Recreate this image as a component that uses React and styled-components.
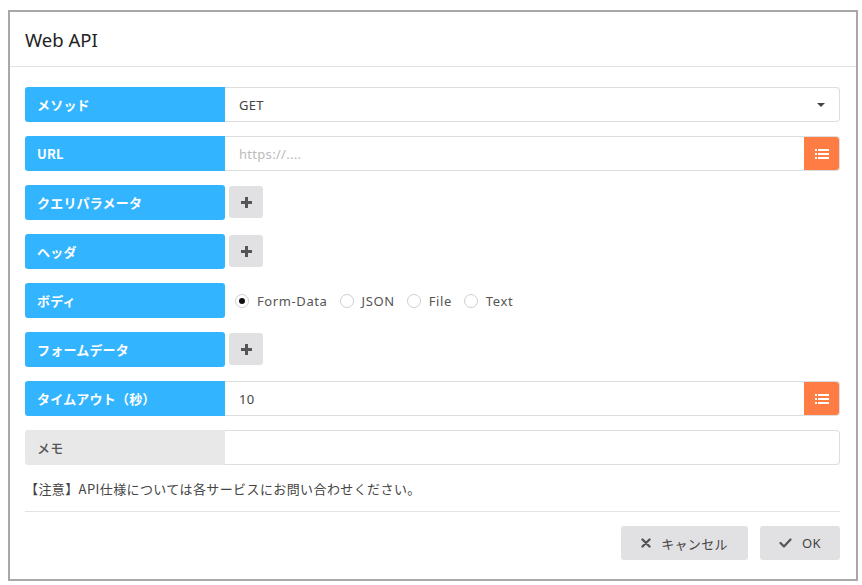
import React from "react";
import styled, { createGlobalStyle } from "styled-components";

const Global = createGlobalStyle`
  html, body { margin: 0; padding: 0; background: #fff; }
  body { font-family: "Open Sans", "Noto Sans CJK JP", sans-serif; }
  * { box-sizing: border-box; }
`;

const Page = styled.div`
  padding: 10px 4px 0 8px;
`;

const Dialog = styled.div`
  width: 850px;
  height: 571px;
  border: 2px solid #a8a8a8;
  background: #fff;
  display: flex;
  flex-direction: column;
`;

const Header = styled.div`
  height: 55px;
  border-bottom: 1px solid #e2e2e2;
  display: flex;
  align-items: center;
  padding: 0 15px;
  font-family: "Noto Sans", "Noto Sans CJK JP", sans-serif;
  font-size: 18.5px;
  color: #222;
`;

const Body = styled.div`
  padding: 20px 16px 0 15px;
  display: flex;
  flex-direction: column;
`;

const Row = styled.div`
  display: flex;
  height: 35px;
  margin-bottom: 14px;
  align-items: stretch;
`;

const Label = styled.div`
  width: 200px;
  flex: none;
  display: flex;
  align-items: center;
  padding-left: 12px;
  border-radius: ${(p) => (p.$solo ? "3px" : "3px 0 0 3px")};
  background: ${(p) => (p.$muted ? "#e8e8e8" : "#33b4ff")};
  color: ${(p) => (p.$muted ? "#555" : "#fff")};
  font-family: "Noto Sans CJK JP", sans-serif;
  font-weight: ${(p) => (p.$muted ? 500 : 700)};
  font-size: 13px;
  letter-spacing: 0.2px;
`;

const Field = styled.div`
  flex: 1;
  display: flex;
  align-items: center;
  border: 1px solid #dedede;
  border-left: none;
  border-radius: 0 4px 4px 0;
  padding-left: 14px;
  font-family: "Noto Sans", "Noto Sans CJK JP", sans-serif;
  font-size: 13px;
  letter-spacing: 0.3px;
  color: ${(p) => (p.$placeholder ? "#bbb" : "#444")};
  overflow: hidden;
`;

const FieldText = styled.span`
  flex: 1;
`;

const Caret = styled.span`
  width: 0;
  height: 0;
  border-left: 4px solid transparent;
  border-right: 4px solid transparent;
  border-top: 4px solid #444;
  margin-right: 14px;
`;

const OrangeBtn = styled.div`
  width: 36px;
  align-self: stretch;
  margin: -1px -1px -1px 0;
  background: #ff7d45;
  border-radius: 0 4px 4px 0;
  display: flex;
  align-items: center;
  justify-content: center;
`;

const PlusBtn = styled.div`
  width: 34px;
  height: 32px;
  margin: 1px 0 0 4px;
  align-self: flex-start;
  background: #e1e1e3;
  border-radius: 3px;
  display: flex;
  align-items: center;
  justify-content: center;
`;

const Radios = styled.div`
  display: flex;
  align-items: center;
  padding-left: 10px;
  gap: 12px;
  font-family: "Noto Sans", sans-serif;
  font-size: 13px;
  letter-spacing: 0.6px;
  color: #555;
`;

const RadioItem = styled.label`
  display: flex;
  align-items: center;
  gap: 8px;
`;

const RadioCircle = styled.span`
  width: 14px;
  height: 14px;
  border-radius: 50%;
  border: 1px solid #cfcfcf;
  display: flex;
  align-items: center;
  justify-content: center;
  &::after {
    content: "";
    width: 6px;
    height: 6px;
    border-radius: 50%;
    background: ${(p) => (p.$on ? "#111" : "transparent")};
  }
`;

const Note = styled.div`
  font-family: "Noto Sans CJK JP", sans-serif;
  font-size: 13px;
  letter-spacing: 0.4px;
  color: #444;
  height: 32px;
  line-height: 20px;
`;

const Divider = styled.div`
  height: 1px;
  background: #e3e3e3;
`;

const Footer = styled.div`
  display: flex;
  justify-content: flex-end;
  gap: 12px;
  padding-top: 14px;
`;

const FootBtn = styled.div`
  height: 34px;
  width: ${(p) => p.$w}px;
  background: #e1e1e3;
  border-radius: 3px;
  display: flex;
  align-items: center;
  justify-content: center;
  gap: 10px;
  font-family: "Noto Sans", "Noto Sans CJK JP", sans-serif;
  font-size: 13px;
  letter-spacing: 0.3px;
  color: #444;
`;

const ListIcon = () => (
  <svg width="14" height="12" viewBox="0 0 14 12">
    <g fill="#fff">
      <rect x="0" y="1" width="2" height="2" />
      <rect x="3" y="1" width="11" height="2" />
      <rect x="0" y="5" width="2" height="2" />
      <rect x="3" y="5" width="11" height="2" />
      <rect x="0" y="9" width="2" height="2" />
      <rect x="3" y="9" width="11" height="2" />
    </g>
  </svg>
);

const PlusIcon = () => (
  <svg width="11" height="11" viewBox="0 0 11 11">
    <path d="M4 0h3v4h4v3H7v4H4V7H0V4h4z" fill="#555" />
  </svg>
);

const XIcon = () => (
  <svg width="10" height="10" viewBox="0 0 10 10">
    <path d="M1.5 1.5l7 7M8.5 1.5l-7 7" stroke="#555" strokeWidth="2.4" strokeLinecap="round" />
  </svg>
);

const CheckIcon = () => (
  <svg width="13" height="10" viewBox="0 0 13 10">
    <path d="M1.5 5l3.5 3.5L11.5 1.5" stroke="#555" strokeWidth="2.2" fill="none" strokeLinecap="round" strokeLinejoin="round" />
  </svg>
);

export default function App() {
  return (
    <Page>
      <Global />
      <Dialog>
        <Header>Web API</Header>
        <Body>
          <Row>
            <Label>メソッド</Label>
            <Field>
              <FieldText>GET</FieldText>
              <Caret />
            </Field>
          </Row>
          <Row>
            <Label>URL</Label>
            <Field $placeholder>
              <FieldText>https://....</FieldText>
              <OrangeBtn><ListIcon /></OrangeBtn>
            </Field>
          </Row>
          <Row>
            <Label $solo>クエリパラメータ</Label>
            <PlusBtn><PlusIcon /></PlusBtn>
          </Row>
          <Row>
            <Label $solo>ヘッダ</Label>
            <PlusBtn><PlusIcon /></PlusBtn>
          </Row>
          <Row>
            <Label $solo>ボディ</Label>
            <Radios>
              <RadioItem><RadioCircle $on />Form-Data</RadioItem>
              <RadioItem><RadioCircle />JSON</RadioItem>
              <RadioItem><RadioCircle />File</RadioItem>
              <RadioItem><RadioCircle />Text</RadioItem>
            </Radios>
          </Row>
          <Row>
            <Label $solo>フォームデータ</Label>
            <PlusBtn><PlusIcon /></PlusBtn>
          </Row>
          <Row>
            <Label>タイムアウト（秒）</Label>
            <Field>
              <FieldText>10</FieldText>
              <OrangeBtn><ListIcon /></OrangeBtn>
            </Field>
          </Row>
          <Row>
            <Label $muted>メモ</Label>
            <Field />
          </Row>
          <Note>【注意】API仕様については各サービスにお問い合わせください。</Note>
          <Divider />
          <Footer>
            <FootBtn $w={127}><XIcon />キャンセル</FootBtn>
            <FootBtn $w={80}><CheckIcon />OK</FootBtn>
          </Footer>
        </Body>
      </Dialog>
    </Page>
  );
}
